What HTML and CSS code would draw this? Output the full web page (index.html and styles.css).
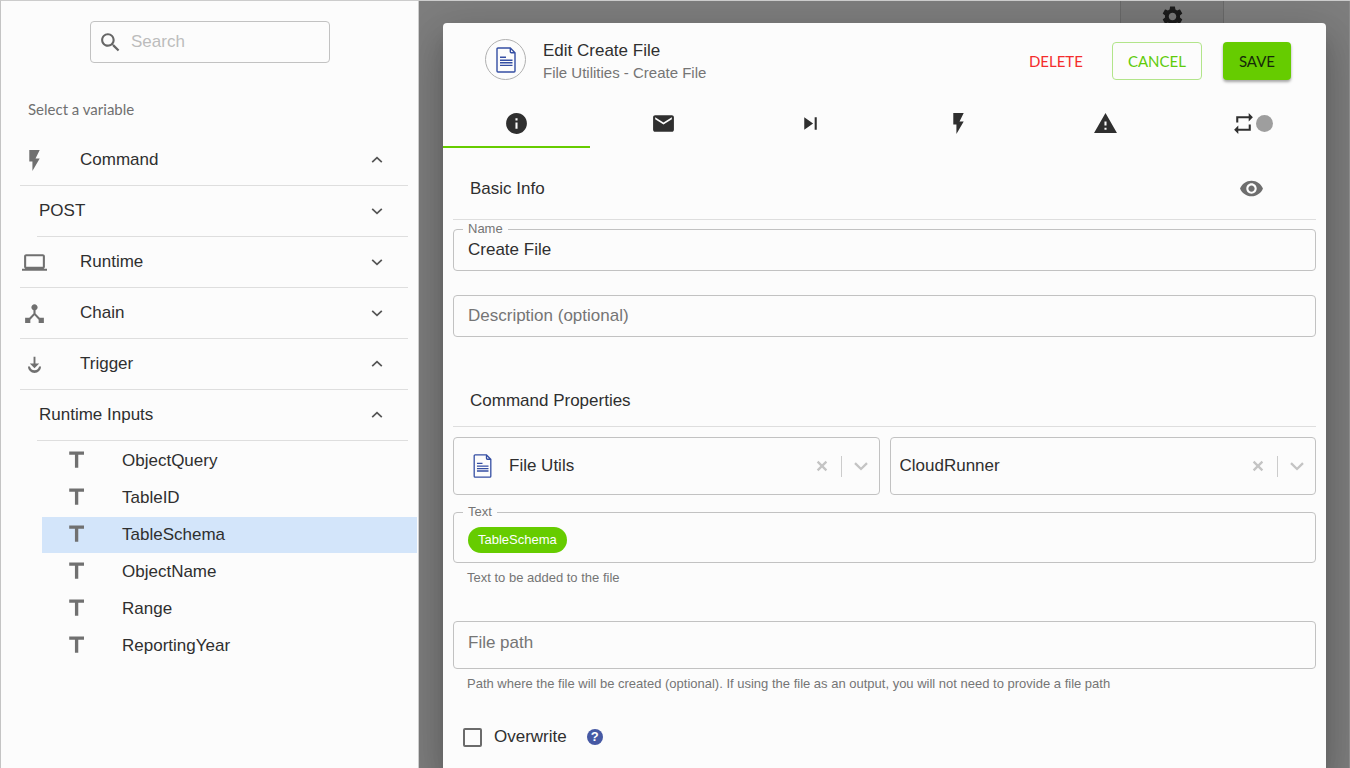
FILE: index.html
```html
<!DOCTYPE html>
<html lang="en">
<head>
<meta charset="utf-8">
<title>Edit Create File</title>
<link rel="stylesheet" href="styles.css">
</head>
<body>
<svg class="sprite" aria-hidden="true">
  <symbol id="bolt" viewBox="0 0 24 24"><path d="M7 2v11h3v9l7-12h-4l4-8z"/></symbol>
  <symbol id="chevron" viewBox="0 0 12 12"><path d="M1.200 3.800L6 8.400l4.800-4.600" fill="none" stroke="currentColor" stroke-width="1.700"/></symbol>
  <symbol id="type" viewBox="0 0 24 24"><path d="M5 2.500v3h5.500v12.500h3.200V5.500H19.200v-3z"/></symbol>
  <symbol id="doc" viewBox="0 0 20 26"><g fill="none" stroke="#344ea3" stroke-width="1.400"><path d="M14.300 1H2Q1 1 1 2v22q0 1 1 1h16q1 0 1-1V5.700zM14.300 1v3.700q0 1 1 1H19"/><path d="M4 10.200h6M4 13.200h12.500M4 15.800h12.500M4 18.400h12.500"/></g></symbol>
  <symbol id="clear" viewBox="0 0 20 20"><path d="M4.500 4.500l11 11m0-11l-11 11" fill="none" stroke="currentColor" stroke-width="2.800"/></symbol>
  <symbol id="drop" viewBox="0 0 20 20"><path d="M4 7.200l6 5.800 6-5.800" fill="none" stroke="currentColor" stroke-width="2.300"/></symbol>
</svg>
<div class="app">
  <aside class="sidebar">
    <label class="search">
      <svg class="icon" viewBox="0 0 24 24"><path d="M15.500 14h-.79l-.28-.27C15.410 12.590 16 11.110 16 9.500 16 5.910 13.090 3 9.500 3S3 5.910 3 9.500 5.910 16 9.500 16c1.610 0 3.090-.59 4.230-1.570l.27.28v.79l5 4.990L20.490 19l-4.990-5zm-6 0C7.010 14 5 11.990 5 9.500S7.010 5 9.500 5 14 7.010 14 9.500 11.990 14 9.500 14z"/></svg>
      <input type="search" placeholder="Search" aria-label="Search variables">
    </label>
    <h2 class="sidebar-title">Select a variable</h2>
    <nav class="groups">
      <button class="group" aria-expanded="true"><svg class="icon"><use href="#bolt"/></svg><span class="group-name">Command</span><svg class="chevron up"><use href="#chevron"/></svg></button>
      <button class="group sub" aria-expanded="false"><span class="group-name">POST</span><svg class="chevron"><use href="#chevron"/></svg></button>
      <button class="group" aria-expanded="false"><svg class="icon" viewBox="0 0 24 24"><path d="M20 18c1.100 0 1.990-.9 1.990-2L22 6c0-1.100-.9-2-2-2H4c-1.100 0-2 .9-2 2v10c0 1.100.9 2 2 2H0v2h24v-2h-4zM4 6h16v10H4V6z"/></svg><span class="group-name">Runtime</span><svg class="chevron"><use href="#chevron"/></svg></button>
      <button class="group" aria-expanded="false"><svg class="icon" viewBox="0 0 24 24"><path d="M17 16l-4-4V8.820C14.160 8.400 15 7.300 15 6c0-1.660-1.340-3-3-3S9 4.340 9 6c0 1.300.84 2.400 2 2.820V12l-4 4H3v5h5v-3.050l4-4.200 4 4.200V21h5v-5h-4z"/></svg><span class="group-name">Chain</span><svg class="chevron"><use href="#chevron"/></svg></button>
      <button class="group" aria-expanded="true"><svg class="icon" viewBox="0 0 24 24"><path d="M11.100 4.500h1.800V11h3.600L12 15.500 7.500 11h3.600zM5.700 13.900h1.900a4.500 4.500 0 0 0 8.800 0h1.900a6.300 6.300 0 0 1-12.600 0z"/></svg><span class="group-name">Trigger</span><svg class="chevron up"><use href="#chevron"/></svg></button>
      <button class="group sub" aria-expanded="true"><span class="group-name">Runtime Inputs</span><svg class="chevron up"><use href="#chevron"/></svg></button>
      <ul class="variables">
        <li><button class="variable"><svg class="icon"><use href="#type"/></svg>ObjectQuery</button></li>
        <li><button class="variable"><svg class="icon"><use href="#type"/></svg>TableID</button></li>
        <li><button class="variable selected"><svg class="icon"><use href="#type"/></svg>TableSchema</button></li>
        <li><button class="variable"><svg class="icon"><use href="#type"/></svg>ObjectName</button></li>
        <li><button class="variable"><svg class="icon"><use href="#type"/></svg>Range</button></li>
        <li><button class="variable"><svg class="icon"><use href="#type"/></svg>ReportingYear</button></li>
      </ul>
    </nav>
  </aside>

  <main class="workspace">
    <div class="toolbar">
      <div class="toolbar-cell"><svg class="icon" viewBox="0 0 24 24"><path d="M19.140 12.940c.04-.3.06-.61.06-.94 0-.32-.02-.64-.07-.94l2.030-1.580c.18-.14.23-.41.12-.61l-1.920-3.320c-.12-.22-.37-.29-.59-.22l-2.390.96c-.5-.38-1.030-.7-1.620-.94l-.36-2.540c-.04-.24-.24-.41-.48-.41h-3.840c-.24 0-.43.17-.47.41l-.36 2.540c-.59.24-1.130.57-1.620.94l-2.390-.96c-.22-.08-.47 0-.59.22L2.740 8.870c-.12.21-.08.47.12.61l2.030 1.580c-.05.3-.09.63-.09.94s.02.64.07.94l-2.030 1.580c-.18.14-.23.41-.12.61l1.920 3.320c.12.22.37.29.59.22l2.390-.96c.5.38 1.030.7 1.620.94l.36 2.540c.05.24.24.41.48.41h3.840c.24 0 .44-.17.47-.41l.36-2.540c.59-.24 1.130-.56 1.620-.94l2.390.96c.22.08.47 0 .59-.22l1.920-3.320c.12-.22.07-.47-.12-.61l-2.010-1.580zM12 15.600c-1.980 0-3.600-1.620-3.600-3.600s1.620-3.600 3.600-3.600 3.600 1.620 3.600 3.600-1.620 3.600-3.600 3.600z"/></svg></div>
    </div>

    <section class="dialog" role="dialog" aria-labelledby="dialog-title">
      <header class="dialog-header">
        <span class="avatar"><svg class="doc"><use href="#doc"/></svg></span>
        <div class="heading">
          <h1 id="dialog-title">Edit Create File</h1>
          <p>File Utilities - Create File</p>
        </div>
        <div class="actions">
          <button class="btn btn-delete">DELETE</button>
          <button class="btn btn-cancel">CANCEL</button>
          <button class="btn btn-save">SAVE</button>
        </div>
      </header>

      <div class="tabs" role="tablist">
        <button class="tab active" role="tab" aria-selected="true" aria-label="Info"><svg class="icon" viewBox="0 0 24 24"><path d="M12 2C6.480 2 2 6.480 2 12s4.480 10 10 10 10-4.480 10-10S17.520 2 12 2zm1 15h-2v-6h2v6zm0-8h-2V7h2v2z"/></svg></button>
        <button class="tab" role="tab" aria-selected="false" aria-label="Notifications"><svg class="icon" viewBox="0 0 24 24"><path d="M20 4H4c-1.100 0-1.990.9-1.990 2L2 18c0 1.100.9 2 2 2h16c1.100 0 2-.9 2-2V6c0-1.100-.9-2-2-2zm0 4l-8 5-8-5V6l8 5 8-5v2z"/></svg></button>
        <button class="tab" role="tab" aria-selected="false" aria-label="Next step"><svg class="icon" viewBox="0 0 24 24"><path d="M6 18l8.500-6L6 6v12zM16 6v12h2V6h-2z"/></svg></button>
        <button class="tab" role="tab" aria-selected="false" aria-label="Events"><svg class="icon"><use href="#bolt"/></svg></button>
        <button class="tab" role="tab" aria-selected="false" aria-label="Errors"><svg class="icon" viewBox="0 0 24 24"><path d="M1 21h22L12 2 1 21zm12-3h-2v-2h2v2zm0-4h-2v-4h2v4z"/></svg></button>
        <button class="tab" role="tab" aria-selected="false" aria-label="Iteration"><svg class="icon" viewBox="0 0 24 24"><path d="M7 7h10v3l4-4-4-4v3H5v6h2V7zm10 10H7v-3l-4 4 4 4v-3h12v-6h-2v4z"/></svg><span class="status"></span></button>
      </div>

      <form class="form">
        <div class="section-head">
          <h2>Basic Info</h2>
          <button type="button" class="icon-button" aria-label="Preview"><svg class="icon" viewBox="0 0 24 24"><path d="M12 4.500C7 4.500 2.730 7.610 1 12c1.730 4.390 6 7.500 11 7.500s9.270-3.110 11-7.500c-1.730-4.390-6-7.500-11-7.500zM12 17c-2.760 0-5-2.240-5-5s2.240-5 5-5 5 2.240 5 5-2.240 5-5 5zm0-8c-1.660 0-3 1.340-3 3s1.340 3 3 3 3-1.340 3-3-1.340-3-3-3z"/></svg></button>
        </div>
        <div class="field">
          <label class="notch" for="name">Name</label>
          <input class="text-input" id="name" type="text" value="Create File">
        </div>
        <div class="field description">
          <input class="text-input" type="text" placeholder="Description (optional)" aria-label="Description (optional)">
        </div>

        <div class="section-head properties">
          <h2>Command Properties</h2>
        </div>
        <div class="selects">
          <div class="picker with-icon">
            <svg class="doc"><use href="#doc"/></svg>
            <select aria-label="Plugin"><option>File Utils</option></select>
            <button type="button" class="clear" aria-label="Clear plugin"><svg><use href="#clear"/></svg></button>
            <span class="divider"></span>
            <svg class="drop"><use href="#drop"/></svg>
          </div>
          <div class="picker">
            <select aria-label="Account"><option>CloudRunner</option></select>
            <button type="button" class="clear" aria-label="Clear account"><svg><use href="#clear"/></svg></button>
            <span class="divider"></span>
            <svg class="drop"><use href="#drop"/></svg>
          </div>
        </div>

        <div class="field text-field">
          <label class="notch" for="text">Text</label>
          <div class="chips">
            <span class="chip">TableSchema</span>
            <input id="text" type="text">
          </div>
        </div>
        <p class="helper">Text to be added to the file</p>

        <div class="field path-field">
          <input class="text-input tall" type="text" placeholder="File path" aria-label="File path">
        </div>
        <p class="helper">Path where the file will be created (optional). If using the file as an output, you will not need to provide a file path</p>

        <div class="overwrite">
          <label><input type="checkbox">Overwrite</label>
          <button type="button" class="help" aria-label="Help">?</button>
        </div>
      </form>
    </section>
  </main>
</div>
</body>
</html>
```
FILE: styles.css
```css
* {
  box-sizing: border-box;
}

body {
  margin: 0;
  overflow: hidden;
  background: #fcfcfc;
  color: #2f2f2f;
  font: 17px/20px "Liberation Sans", Arial, sans-serif;
}

h1, h2, p, ul {
  margin: 0;
  padding: 0;
  font-size: inherit;
  font-weight: 400;
}

button, input, select {
  margin: 0;
  padding: 0;
  border: 0;
  background: none;
  color: inherit;
  font: inherit;
  outline: none;
}

button {
  cursor: pointer;
}

.sprite {
  display: none;
}

.icon {
  flex: none;
  width: 25px;
  height: 25px;
  fill: currentColor;
}

.app {
  display: flex;
  height: 100vh;
  border-top: 1px solid #cccccc;
  border-left: 1px solid #c4c4c4;
}

/* Variable picker */

.sidebar {
  flex: none;
  width: 418px;
  padding-top: 20px;
  border-right: 1px solid #cdcdcd;
}

.search {
  display: flex;
  align-items: center;
  gap: 8px;
  width: 240px;
  height: 42px;
  margin: 0 auto 0 89px;
  padding-left: 7px;
  border: 1px solid #c2c2c2;
  border-radius: 4px;
  color: #666666;
}

.search input {
  flex: 1;
  min-width: 0;
}

.search input::placeholder {
  color: #bcbcbc;
  opacity: 1;
}

.sidebar-title {
  margin: 36px 0 16px 27px;
  color: #707070;
  font: 15px/20px Lato, sans-serif;
}

.groups {
  display: flex;
  flex-direction: column;
  padding-left: 19px;
}

.group {
  display: flex;
  align-items: center;
  height: 51px;
  margin-right: 10px;
  padding: 0 25px 0 2px;
  border-bottom: 1px solid #dedede;
  text-align: left;
}

.group .icon {
  margin-right: 33px;
  color: #707070;
}

.group.sub {
  margin-left: 17px;
}

.group-name {
  flex: 1;
}

.chevron {
  width: 12px;
  height: 12px;
  color: #555555;
}

.chevron.up {
  transform: rotate(180deg);
}

.variables {
  display: grid;
  gap: 1px;
  margin: 0 1px 0 22px;
  padding-top: 2px;
  list-style: none;
}

.variable {
  display: flex;
  align-items: center;
  gap: 33px;
  width: 100%;
  height: 36px;
  padding-left: 22px;
  text-align: left;
}

.variable .icon {
  color: #707070;
}

.variable.selected {
  background: #d3e5fa;
}

/* Dimmed workspace */

.workspace {
  flex: 1;
  display: grid;
  grid-template: minmax(0, 1fr) / minmax(0, 1fr);
  min-width: 0;
  background: #7e7e7e;
  border-right: 1px solid #8a8a8a;
  overflow: hidden;
}

.toolbar {
  grid-area: 1 / 1;
  display: flex;
  justify-content: flex-end;
  height: 30px;
  padding-right: 125px;
}

.toolbar-cell {
  display: flex;
  align-items: center;
  justify-content: center;
  width: 104px;
  border: solid #696969;
  border-width: 0 1px;
  background: #787878;
  color: #1c1c1c;
}

.dialog {
  grid-area: 1 / 1;
  margin: 22px 23px 0 24px;
  border-radius: 4px 4px 0 0;
  background: #fcfcfc;
  box-shadow: 0 11px 15px -7px rgba(0, 0, 0, .2), 0 24px 38px 3px rgba(0, 0, 0, .14), 0 9px 46px 8px rgba(0, 0, 0, .12);
}

.dialog-header {
  display: flex;
  align-items: center;
  height: 76px;
  padding: 0 35px 3px 42px;
}

.avatar {
  display: grid;
  place-items: center;
  width: 41px;
  height: 41px;
  margin-right: 17px;
  border: 1px solid #b0b0b0;
  border-radius: 50%;
}

.doc {
  flex: none;
  width: 20px;
  height: 26px;
}

.heading {
  padding-top: 3px;
}

.heading h1 {
  line-height: 23px;
}

.heading p {
  color: #757575;
  font-size: 15px;
  line-height: 22px;
}

.actions {
  display: flex;
  gap: 21px;
  margin-left: auto;
  padding-top: 2px;
}

.btn {
  height: 38px;
  padding: 0 15px;
  border: 1px solid transparent;
  border-radius: 4px;
  font: 15px/20px Lato, sans-serif;
}

.btn-delete {
  padding: 0 7px;
  color: #f42c2c;
}

.btn-cancel {
  border-color: #b2e58a;
  color: #5fcb0b;
}

.btn-save {
  background: #66cc00;
  color: #16290a;
  box-shadow: 0 2px 3px rgba(0, 0, 0, .35);
}

.tabs {
  display: grid;
  grid-template-columns: repeat(6, 1fr);
}

.tab {
  display: flex;
  align-items: center;
  justify-content: center;
  height: 49px;
  padding-top: 2px;
  border-bottom: 2px solid transparent;
}

.tab.active {
  border-color: #66cc00;
}

.status {
  width: 17px;
  height: 17px;
  border-radius: 50%;
  background: #9e9e9e;
}

/* Form */

.form {
  padding: 10px;
}

.section-head {
  display: flex;
  align-items: center;
  justify-content: space-between;
  height: 62px;
  margin-bottom: 9px;
  padding: 0 52px 0 17px;
  border-bottom: 1px solid #dedede;
}

.section-head.properties {
  height: 52px;
  margin: 38px 0 10px;
}

.icon-button {
  display: flex;
  color: #6e6e6e;
}

.field {
  position: relative;
}

.notch {
  position: absolute;
  top: -8px;
  left: 10px;
  padding: 0 5px;
  background: #fcfcfc;
  color: #757575;
  font-size: 13px;
  line-height: 16px;
}

.text-input {
  display: block;
  width: 100%;
  height: 42px;
  padding: 0 14px;
  border: 1px solid #c2c2c2;
  border-radius: 4px;
}

.text-input.tall {
  height: 48px;
  padding-bottom: 4px;
}

.text-input::placeholder {
  color: #757575;
  opacity: 1;
}

.description {
  margin-top: 24px;
}

.selects {
  display: grid;
  grid-template-columns: 1fr 1fr;
  gap: 10px;
}

.picker {
  display: flex;
  align-items: center;
  height: 58px;
  padding: 0 8px 0 9px;
  border: 1px solid #c2c2c2;
  border-radius: 4px;
  color: #c4c4c4;
}

.picker.with-icon {
  padding-left: 19px;
}

.picker.with-icon .doc {
  width: 19px;
  height: 24px;
  margin-right: 17px;
}

.picker select {
  flex: 1;
  min-width: 0;
  appearance: none;
  color: #2f2f2f;
}

.clear {
  display: flex;
}

.clear svg {
  width: 16px;
  height: 16px;
}

.divider {
  width: 1px;
  height: 21px;
  margin: 0 9px 0 11px;
  background: #cccccc;
}

.drop {
  width: 20px;
  height: 20px;
  pointer-events: none;
}

.text-field {
  margin-top: 17px;
}

.chips {
  display: flex;
  align-items: center;
  gap: 8px;
  padding: 14px 14px 9px;
  border: 1px solid #c2c2c2;
  border-radius: 4px;
}

.chips input {
  flex: 1;
  min-width: 0;
}

.chip {
  padding: 0 10px;
  border-radius: 13px;
  background: #66cc00;
  color: #ffffff;
  font-size: 13px;
  line-height: 26px;
}

.helper {
  padding: 6px 14px 0;
  color: #757575;
  font-size: 13px;
  line-height: 18px;
}

.path-field {
  margin-top: 34px;
}

.overwrite {
  display: flex;
  align-items: center;
  gap: 20px;
  margin-top: 34px;
  padding-left: 10px;
}

.overwrite label {
  display: flex;
  align-items: center;
  gap: 12px;
}

.overwrite input {
  appearance: none;
  width: 19px;
  height: 19px;
  border: 2px solid #6b6b6b;
  border-radius: 2px;
}

.help {
  width: 16px;
  height: 16px;
  border-radius: 50%;
  background: #4659a4;
  color: #ffffff;
  font-size: 13px;
  font-weight: 700;
  line-height: 16px;
}
```
